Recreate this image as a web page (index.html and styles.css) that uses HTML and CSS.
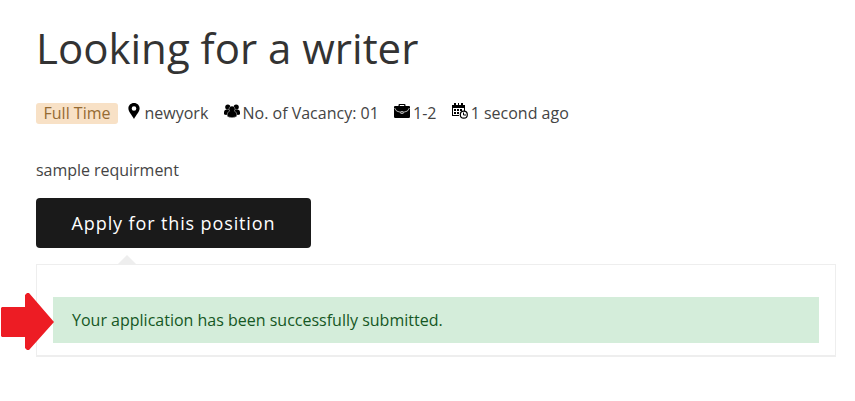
FILE: index.html
```
<!DOCTYPE html>
<html lang="en">
  <head>
    <meta charset="UTF-8" />
    <meta name="viewport" content="width=device-width, initial-scale=1.0" />
    <title>Looking for a writer</title>
    <link rel="stylesheet" href="styles.css">
  </head>
  <body>
    <div class="container">
      <h1>Looking for a writer</h1>

      <ul class="job-meta">
        <li class="job-type">Full Time</li>
        <li class="location">
          <svg class="icon" viewBox="0 0 16 16">
            <path fill-rule="evenodd" d="M8 0C4.7 0 2.4 2.4 2.4 5.5C2.4 9 6 12 8 16C10 12 13.6 9 13.6 5.5C13.6 2.4 11.3 0 8 0ZM8 3.2a2.3 2.3 0 1 1 0 4.6a2.3 2.3 0 1 1 0-4.6Z" />
          </svg>
          <span>newyork</span>
        </li>
        <li class="vacancy">
          <svg class="icon" viewBox="0 0 16 16">
            <circle cx="3.8" cy="4" r="2.6" />
            <circle cx="12.2" cy="4" r="2.6" />
            <path d="M0 11.3V9.5Q0 6.6 3 6.5H13Q16 6.6 16 9.5V11.3Q14 12.4 12 11.4H4Q2 12.4 0 11.3Z" />
            <path class="front" d="M8 3a3.1 3.1 0 0 1 2.3 5.1Q12.8 8.9 12.8 11.5V13.6Q8 16 3.2 13.6V11.5Q3.2 8.9 5.7 8.1A3.1 3.1 0 0 1 8 3Z" />
          </svg>
          <span>No. of Vacancy: 01</span>
        </li>
        <li class="experience">
          <svg class="icon" viewBox="0 0 16 16">
            <path d="M4.5 3V2Q4.5 1 5.5 1H10.5Q11.5 1 11.5 2V3H15Q16 3 16 4V13.7Q16 15 14.7 15H1.3Q0 15 0 13.7V4Q0 3 1 3ZM5.8 3H10.2V2.1H5.8Z" fill-rule="evenodd" />
            <path class="seam" d="M.6 5Q1.6 9 6.6 9.3M15.4 5Q14.4 9 9.4 9.3M6.8 8.6H9.2V10.4H6.8Z" />
          </svg>
          <span>1-2</span>
        </li>
        <li class="posted">
          <svg class="icon" viewBox="0 0 16 16">
            <path d="M0 2H13V8H12V5H1V12H7V13H0Z" />
            <path d="M2 0H4V3H2ZM6 0H7V3H6ZM9 0H11V3H9Z" />
            <path d="M2 6H4V8H2ZM5 6H7V8H5ZM8 6H10V8H8ZM2 9H4V11H2ZM5 9H7V11H5Z" />
            <circle class="clock" cx="11.8" cy="11.7" r="3.5" />
            <path class="hands" d="M11.5 9.5V12H14" />
          </svg>
          <span>1 second ago</span>
        </li>
      </ul>

      <p class="description">sample requirment</p>

      <button type="button" class="apply-button">Apply for this position</button>

      <div class="application">
        <div class="message">
          Your application has been successfully submitted.
          <svg class="pointer" viewBox="0 0 54 58">
            <path d="M2 14H25V2L27 0H29L54 29L29 57H27L25 55V44H2L1 43V15Z" />
          </svg>
        </div>
      </div>
    </div>
  </body>
</html>
```
FILE: styles.css
```
body {
  margin: 0;
  background: #fff;
  color: #444;
  font-family: "Open Sans", sans-serif;
  font-size: 16px;
  line-height: 24px;
}
.container {
  width: 800px;
  margin-left: 36px;
  padding-top: 19px;
}
h1 {
  margin: 0;
  color: #333;
  font-size: 42px;
  font-weight: 400;
  line-height: 58px;
}
.job-meta {
  display: flex;
  align-items: center;
  height: 24px;
  margin: 24px 0 33px;
  padding: 0;
  list-style: none;
}
.job-meta li {
  display: flex;
  white-space: nowrap;
}
.job-meta .job-type {
  box-sizing: border-box;
  width: 82px;
  justify-content: center;
  border-radius: 3px;
  background: #f8e1c6;
  color: #956b33;
  line-height: 21px;
}
.icon {
  width: 16px;
  height: 16px;
  margin: 2px 2.5px 0 0;
  fill: #000;
}
.location {
  margin-left: 8px;
}
.vacancy,
.experience,
.posted {
  margin-left: 15.7px;
}
.front {
  stroke: #fff;
  stroke-width: 0.4;
}
.seam {
  fill: none;
  stroke: #ddd;
  stroke-width: 0.8;
}
.clock {
  fill: #fff;
  stroke: #000;
  stroke-width: 1.2;
}
.hands {
  fill: none;
  stroke: #000;
}
.description {
  margin: 0 0 16px;
  letter-spacing: -0.03px;
}
.apply-button {
  display: block;
  width: 275px;
  height: 50px;
  padding: 0;
  border: 0;
  border-radius: 4px;
  background: #1a1a1a;
  color: #fff;
  font-family: inherit;
  font-size: 18px;
  letter-spacing: 0.88px;
}
.application {
  position: relative;
  box-sizing: border-box;
  height: 93px;
  margin-top: 16px;
  padding: 32px 16px 0;
  border: 1px solid #eee;
  border-bottom-width: 2px;
}
.application::before {
  content: "";
  position: absolute;
  top: -10px;
  left: 81px;
  border: solid transparent;
  border-width: 0 9px 9px;
  border-bottom-color: #eee;
}
.message {
  position: relative;
  padding: 11px 19px;
  background: #d4edda;
  color: #155724;
}
.pointer {
  position: absolute;
  top: -4px;
  left: -53px;
  width: 54px;
  height: 58px;
  fill: #ed1c24;
}
```
